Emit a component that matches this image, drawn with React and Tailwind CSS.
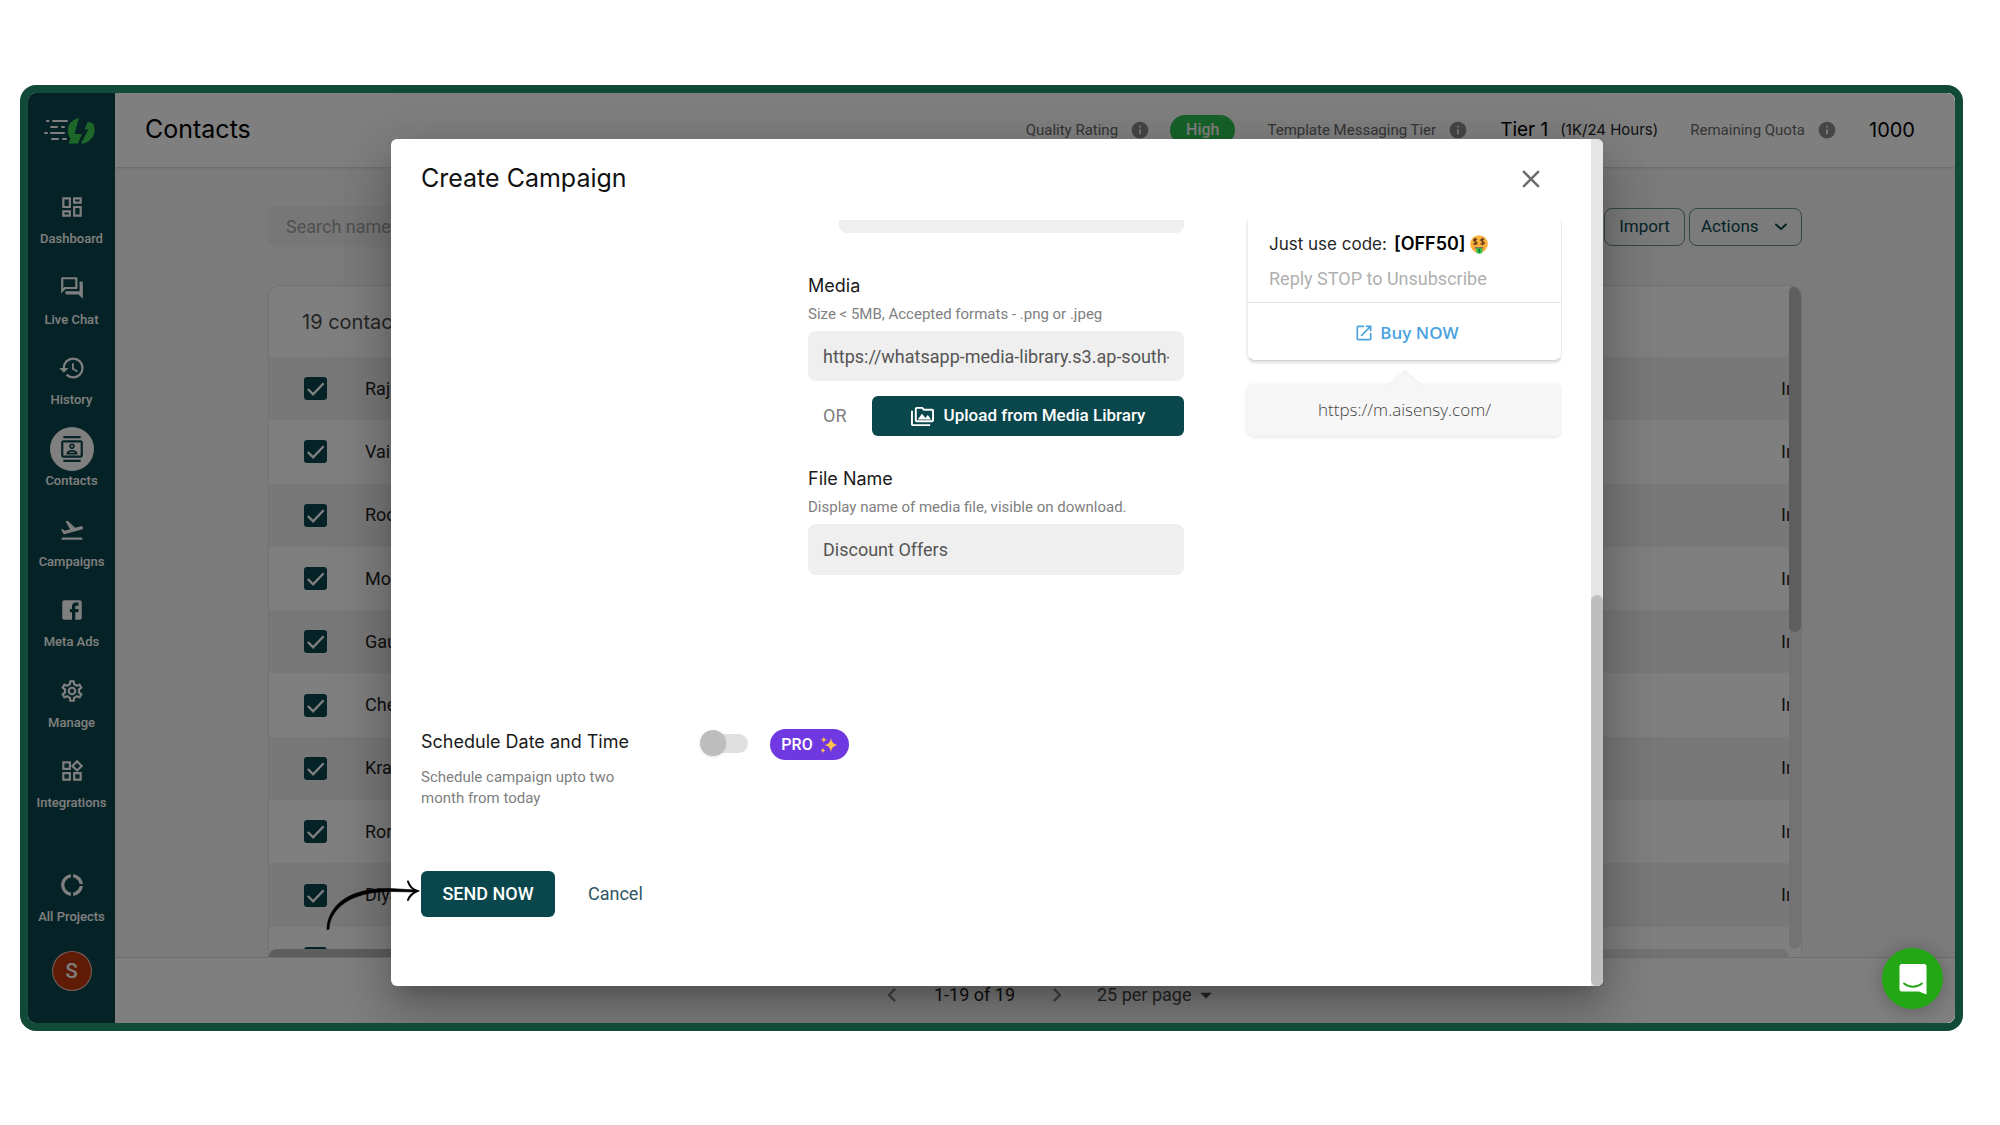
import {
  MdOutlineDashboard,
  MdOutlineForum,
  MdHistory,
  MdOutlineContacts,
  MdFlightTakeoff,
  MdOutlineSettings,
  MdOutlineWidgets,
  MdDonutLarge,
  MdInfo,
  MdOutlinePermMedia,
  MdOpenInNew,
  MdClose,
  MdChevronLeft,
  MdChevronRight,
  MdArrowDropDown,
} from "react-icons/md";

function FacebookSquare({ size }) {
  return (
    <svg width={size} height={size} viewBox="0 0 24 24" fill="currentColor" aria-hidden="true">
      <path d="M5 3h14a2 2 0 0 1 2 2v14a2 2 0 0 1-2 2H5a2 2 0 0 1-2-2V5a2 2 0 0 1 2-2m13 2h-2.5A3.5 3.5 0 0 0 12 8.500V11h-2v3h2v7h3v-7h3v-3h-3V9a1 1 0 0 1 1-1h2V5z" />
    </svg>
  );
}

const NAV = [
  { label: "Dashboard", Icon: MdOutlineDashboard, size: 26 },
  { label: "Live Chat", Icon: MdOutlineForum, size: 26 },
  { label: "History", Icon: MdHistory, size: 28 },
  { label: "Contacts", Icon: MdOutlineContacts, size: 26, active: true },
  { label: "Campaigns", Icon: MdFlightTakeoff, size: 26 },
  { label: "Meta Ads", Icon: FacebookSquare, size: 26 },
  { label: "Manage", Icon: MdOutlineSettings, size: 26 },
  { label: "Integrations", Icon: MdOutlineWidgets, size: 26 },
];

const ROWS = ["Raj", "Vai", "Roc", "Mo", "Gau", "Che", "Kra", "Ror", "Diya", ""];

function Logo() {
  return (
    <svg width="52" height="28" viewBox="0 0 52 28" aria-label="AiSensy" role="img">
      <g stroke="#ffffff" strokeWidth="2" strokeLinecap="round">
        <path d="M4 5h1.500M10 5h14M8 11h6M19 11h2M2 17h2M8 17h13M9 23h6M20 23h3" />
      </g>
      <path
        d="M36 2C28 4 24.500 9 25 15.500c.2 3 1 5 2.500 7L25.500 27.500H35l4-9.500h-7.500z"
        fill="#3bd052"
      />
      <path d="M45 5.500l5 2c2.500 4.500 2 10.500-1 14.500-2.500 3.500-6.500 5.500-11 5.500l7.500-14H41.500z" fill="#3bd052" />
    </svg>
  );
}

function NavItem({ label, Icon, size, active }) {
  return (
    <a href="#" className="flex flex-col items-center text-white">
      <span
        className={
          active
            ? "flex size-11 items-center justify-center rounded-full bg-white text-[#0a474c]"
            : "flex size-11 items-center justify-center"
        }
      >
        <Icon size={size} />
      </span>
      <span className="text-[13px] leading-5 font-medium whitespace-nowrap">{label}</span>
    </a>
  );
}

function Sidebar() {
  return (
    <aside className="flex w-[87px] shrink-0 flex-col items-center bg-[#0a474c]">
      <div className="flex h-[92px] items-start pt-[23px] pr-1.5">
        <Logo />
      </div>
      <nav className="grid h-[645px] auto-rows-fr">
        {NAV.map((item) => (
          <NavItem key={item.label} {...item} />
        ))}
      </nav>
      <div className="mt-[33px]">
        <NavItem label="All Projects" Icon={MdDonutLarge} size={26} />
      </div>
      <button className="mt-6 flex size-10 items-center justify-center rounded-full border border-white/70 bg-[#bf360c] text-xl font-medium text-white">
        S
      </button>
    </aside>
  );
}

function Header() {
  return (
    <header className="flex h-[74px] shrink-0 items-center justify-between bg-white pr-10 pl-[30px] shadow-sm">
      <h1 className="font-[Inter] text-[25px] text-black">Contacts</h1>
      <div className="flex items-center whitespace-nowrap text-[#6b6b6b]">
        <span className="text-[15px]">Quality Rating</span>
        <MdInfo size={20} className="ml-3 text-[#8c8c8c]" />
        <span className="ml-5 flex h-[30px] items-center rounded-full bg-[#2fc452] px-4 font-medium text-white">
          High
        </span>
        <span className="ml-8 text-[15px]">Template Messaging Tier</span>
        <MdInfo size={20} className="ml-3 text-[#8c8c8c]" />
        <span className="ml-8 font-[Inter] text-[19px] text-black">Tier 1</span>
        <span className="ml-3 font-[Inter] text-[15px] text-[#222]">(1K/24 Hours)</span>
        <span className="ml-8 text-[15px]">Remaining Quota</span>
        <MdInfo size={20} className="ml-3 text-[#8c8c8c]" />
        <span className="ml-8 font-[Inter] text-xl text-black">1000</span>
      </div>
    </header>
  );
}

function ContactsTable() {
  return (
    <section className="mt-[38px] flex min-h-0 flex-1 flex-col overflow-hidden rounded-t-xl border border-b-0 border-[#e4e4e4] bg-white">
      <div className="flex min-h-0 flex-1">
        <div className="min-w-0 flex-1 overflow-hidden">
          <h2 className="flex h-[71px] items-center pl-[33px] font-[Inter] text-xl text-[#4a4a4a]">
            19 contacts
          </h2>
          <table className="h-[633px] w-full">
            <tbody>
              {ROWS.map((name, i) => (
                <tr key={i} className="odd:bg-[#f1f1f1]">
                  <td className="w-24 pl-[35px]">
                    <label className="grid size-[23px] place-items-center">
                      <input
                        type="checkbox"
                        defaultChecked
                        aria-label={name || "Contact"}
                        className="col-start-1 row-start-1 size-[23px] appearance-none rounded-[3px] bg-[#0a474c]"
                      />
                      <svg
                        viewBox="0 0 24 24"
                        className="pointer-events-none col-start-1 row-start-1 size-[23px]"
                        fill="none"
                        stroke="#fff"
                        strokeWidth="2.500"
                      >
                        <path d="M4 12.500l5.500 5.500L20.500 6.500" />
                      </svg>
                    </label>
                  </td>
                  <td className="text-lg text-[#222]">{name}</td>
                  <td className="w-2 max-w-2 overflow-hidden text-lg text-[#222]">In</td>
                </tr>
              ))}
            </tbody>
          </table>
        </div>
        <div className="w-3 shrink-0 rounded-full bg-[#e6e6e6]">
          <div className="h-[346px] rounded-full bg-[#bcbcbc]" />
        </div>
      </div>
      <div className="mr-3 h-2 rounded-t-lg bg-[#e6e6e6]">
        <div className="h-2 w-2/3 rounded-tl-lg bg-[#bcbcbc]" />
      </div>
    </section>
  );
}

function Footer() {
  return (
    <footer className="flex h-[66px] shrink-0 items-center justify-center border-t border-[#dcdcdc] bg-white pt-2 pl-7 text-lg">
      <button aria-label="Previous page" className="text-[#8a8a8a]">
        <MdChevronLeft size={28} />
      </button>
      <span className="ml-7 text-[#1c1c1c]">1-19 of 19</span>
      <button aria-label="Next page" className="ml-7 text-[#8a8a8a]">
        <MdChevronRight size={28} />
      </button>
      <label className="ml-[26px] flex items-center text-[#4d4d4d]">
        <select aria-label="Rows per page" className="appearance-none bg-transparent">
          <option>25 per page</option>
        </select>
        <MdArrowDropDown size={28} className="pointer-events-none" />
      </label>
    </footer>
  );
}

function MoneyFace() {
  return (
    <svg width="18" height="19" viewBox="0 0 18 19" role="img" aria-label="Money-mouth face">
      <circle cx="9" cy="9" r="8.800" fill="#fcb13b" />
      <g fill="none" stroke="#6d4320" strokeWidth="1.300">
        <path d="M7 4.600C5.500 3.600 3.600 4 3.600 5.200S7.100 6.600 7.100 8 4.700 9.600 3.400 8.400M5.300 2.800v7.400" />
        <path d="M14.200 4.600c-1.500-1-3.400-.6-3.400.6s3.500 1.400 3.500 2.800-2.400 1.600-3.700.4M12.500 2.800v7.400" />
      </g>
      <path d="M4.500 12h9v1.800h-9z" fill="#8b7558" />
      <path d="M6.200 13.300h6.200v3.200a3.100 2.200 0 0 1-6.200 0z" fill="#2fbf4f" />
      <path d="M9.300 13.800v3.600" stroke="#0d6b2b" strokeWidth="1.200" />
    </svg>
  );
}

function Sparkles() {
  return (
    <svg width="18" height="18" viewBox="0 0 18 18" fill="#ffc24a" aria-hidden="true">
      <path d="M11 1.500c.6 4.600 1.800 6.200 6.500 7.500-4.700 1.300-5.900 2.900-6.500 7.500C10.400 11.900 9.200 10.300 4.500 9 9.200 7.700 10.400 6.100 11 1.500z" />
      <path d="M3.800.5c.3 2 .9 2.700 3 3.300-2.100.5-2.700 1.200-3 3.200-.3-2-.9-2.700-3-3.200 2.100-.6 2.700-1.300 3-3.300zM3 11.500c.3 1.800.8 2.400 2.500 2.900-1.700.5-2.200 1.100-2.500 2.900-.3-1.800-.8-2.400-2.500-2.900 1.700-.5 2.200-1.100 2.500-2.900z" />
    </svg>
  );
}

function MediaFields() {
  return (
    <div className="flex w-[376px] flex-col">
      <div className="ml-[31px] h-[13px] rounded-b-lg bg-[#efefef]" />
      <label htmlFor="media" className="mt-[39px] font-[Inter] text-lg leading-7 text-[#1a1a1a]">
        Media
      </label>
      <p className="mt-[3px] text-[15px] leading-[22px] text-[#808080]">
        Size &lt; 5MB, Accepted formats - .png or .jpeg
      </p>
      <input
        id="media"
        defaultValue="https://whatsapp-media-library.s3.ap-south-1.amazonaws.com"
        className="mt-1.5 h-[50px] w-full rounded-lg bg-[#efefef] px-[15px] text-lg text-[#555]"
      />
      <div className="mt-[15px] flex items-center">
        <span className="w-16 pl-[15px] text-lg text-[#808080]">OR</span>
        <button className="flex h-10 flex-1 items-center justify-center gap-2.5 rounded-md bg-[#0a474c] text-[17px] font-medium text-white">
          <MdOutlinePermMedia size={23} />
          Upload from Media Library
        </button>
      </div>
      <label htmlFor="file-name" className="mt-[29px] font-[Inter] text-lg leading-7 text-[#1a1a1a]">
        File Name
      </label>
      <p className="mt-[3px] text-[15px] leading-[22px] text-[#808080]">
        Display name of media file, visible on download.
      </p>
      <input
        id="file-name"
        defaultValue="Discount Offers"
        className="mt-1.5 h-[51px] w-full rounded-lg bg-[#efefef] px-[15px] text-lg text-[#555]"
      />
    </div>
  );
}

function MessagePreview() {
  return (
    <div className="w-[315px] pb-4">
      <div className="rounded-b-lg border-x border-b border-[#ececec] border-b-[#d4d4d4] bg-white shadow-[0_2px_3px_rgba(0,0,0,0.12)]">
        <div className="h-[83px] border-b border-[#e6e6e6] px-[21px] pt-2.5">
          <p className="flex items-center font-[Inter] text-[17px] leading-7 text-[#262626]">
            <span>Just use code:</span>
            <b className="mr-1 ml-[7px] text-lg leading-7 font-semibold text-black">[OFF50]</b>
            <MoneyFace />
          </p>
          <p className="mt-[7px] text-lg leading-7 text-[#b0b0b0]">Reply STOP to Unsubscribe</p>
        </div>
        <a
          href="#"
          className="flex h-[57px] items-center justify-center gap-1.5 pt-0.5 pl-1 font-['Open_Sans'] text-[17px] font-semibold text-[#4ba3e0]"
        >
          <MdOpenInNew size={20} />
          Buy NOW
        </a>
      </div>
      <svg viewBox="0 0 34 17" className="mx-auto mt-[7px] -mb-px block h-[17px] w-[34px]">
        <path d="M1 17L17 2l16 15z" fill="#f6f6f6" />
        <path d="M1 16.500L17 2l16 14.500" fill="none" stroke="#ededed" />
      </svg>
      <div className="flex h-[52px] items-center justify-center rounded-lg bg-[#f6f6f6] font-['Open_Sans'] text-[17px] font-light text-[#444] shadow-[0_1px_4px_rgba(0,0,0,0.12)]">
        https://m.aisensy.com/
      </div>
    </div>
  );
}

function CampaignDialog() {
  return (
    <div
      role="dialog"
      aria-label="Create Campaign"
      className="flex w-full max-w-[1212px] overflow-hidden rounded-md bg-white shadow-[0_14px_19px_-9px_rgba(0,0,0,0.2),0_30px_48px_4px_rgba(0,0,0,0.14),0_11px_58px_10px_rgba(0,0,0,0.12)]"
    >
      <div className="flex min-w-0 flex-1 flex-col pr-[29px] pl-[30px]">
        <div className="flex h-[81px] shrink-0 items-center justify-between pr-4 pb-0.5">
          <h2 className="font-[Inter] text-[25px] text-[#111]">Create Campaign</h2>
          <button aria-label="Close" className="text-[#6e6e6e]">
            <MdClose size={30} />
          </button>
        </div>
        <div className="min-h-0 flex-1 overflow-hidden">
          <div className="flex justify-end gap-[63px]">
            <MediaFields />
            <MessagePreview />
          </div>
          <div className="mt-[153px] flex items-start">
            <div className="w-[279px]">
              <label htmlFor="schedule" className="block font-[Inter] text-lg leading-7 text-[#1a1a1a]">
                Schedule Date and Time
              </label>
              <p className="mt-[11px] w-[220px] text-[15px] leading-[21px] text-[#808080]">
                Schedule campaign upto two month from today
              </p>
            </div>
            <label className="mt-0.5 grid h-[26px] w-12 items-center">
              <input id="schedule" type="checkbox" className="col-start-1 row-start-1 size-0 appearance-none" />
              <span className="col-start-1 row-start-1 ml-2 h-[19px] rounded-full bg-[#e0e0e0]" />
              <span className="col-start-1 row-start-1 size-[26px] rounded-full bg-[#bdbdbd] shadow" />
            </label>
            <span className="mt-px ml-[22px] flex h-[31px] w-[79px] items-center justify-center gap-[7px] rounded-full bg-[#7038e0] pt-px font-medium text-white">
              PRO
              <Sparkles />
            </span>
          </div>
          <div className="mt-[62px] flex items-center text-lg">
            <button className="h-[46px] w-[134px] rounded-md bg-[#0a474c] font-medium text-white">
              SEND NOW
            </button>
            <button className="ml-[33px] text-[#2f5562]">Cancel</button>
          </div>
        </div>
      </div>
      <div className="flex w-3 shrink-0 flex-col bg-[#e5e5e5]">
        <div className="mt-auto h-[391px] rounded-full bg-[#bebebe]" />
      </div>
    </div>
  );
}

function CurvedArrow() {
  return (
    <svg
      viewBox="0 0 100 60"
      className="pointer-events-none absolute top-[782px] left-[292px] h-[60px] w-[100px]"
      fill="none"
      stroke="#000"
      strokeLinecap="round"
      aria-hidden="true"
    >
      <path
        d="M7 54.500C7 38 20 12.500 70 13.500l26 1.500v2l-26-.5C30 16.500 10 34 9 54z"
        fill="#000"
        strokeWidth=".6"
      />
      <path d="M88 6.500c1.500 5 4.500 8 9.500 9.500-5 2-8 5-9.500 9" strokeWidth="2" />
    </svg>
  );
}

function ChatLauncher() {
  return (
    <button
      aria-label="Open chat"
      className="absolute right-3 bottom-3.5 flex size-[61px] items-center justify-center rounded-full bg-[#24a714] shadow-[0_2px_20px_rgba(0,0,0,0.25)]"
    >
      <svg width="28" height="32" viewBox="0 0 28 32" aria-hidden="true">
        <path d="M3 1h22a2.500 2.500 0 0 1 2.500 2.500V31.500L20 28.500H3A2.500 2.500 0 0 1 .5 26V3.500A2.500 2.500 0 0 1 3 1z" fill="#fff" />
        <path d="M5 20.500c5.500 4.300 12.500 4.300 18 0" fill="none" stroke="#24a714" strokeWidth="1.800" strokeLinecap="round" />
      </svg>
    </button>
  );
}

export default function App() {
  return (
    <main className="h-screen bg-white pt-[85px] pr-[37px] pb-[94px] pl-5 font-[Roboto,sans-serif]">
      <div className="relative flex h-full overflow-hidden rounded-2xl border-8 border-[#124a3a]">
        <Sidebar />
        <div className="flex min-w-0 flex-1 flex-col bg-[#f6f6f6]">
          <Header />
          <div className="flex min-h-0 flex-1 flex-col px-[153px] pt-[39px]">
            <div className="flex shrink-0 items-center justify-between">
              <input
                aria-label="Search contacts"
                placeholder="Search name or mobile number"
                className="h-[41px] w-[360px] rounded-lg bg-[#efefef] px-[18px] text-lg placeholder:text-[#a0a0a0]"
              />
              <div className="flex gap-1 text-[17px] text-[#0a474c]">
                <button className="h-[38px] w-[81px] rounded-lg border border-[#0a474c]/60">Import</button>
                <button className="flex h-[38px] w-[113px] items-center justify-between rounded-lg border border-[#0a474c]/60 pr-3.5 pl-[11px]">
                  Actions
                  <svg width="12" height="8" viewBox="0 0 12 8" fill="none" stroke="currentColor" strokeWidth="2">
                    <path d="M1 1.500l5 4.500 5-4.500" strokeLinecap="round" strokeLinejoin="round" />
                  </svg>
                </button>
              </div>
            </div>
            <ContactsTable />
          </div>
          <Footer />
        </div>
        <div className="absolute inset-0 flex justify-center bg-black/50 pt-[46px] pb-[37px] pl-[11px]">
          <CampaignDialog />
        </div>
        <CurvedArrow />
        <ChatLauncher />
      </div>
    </main>
  );
}
